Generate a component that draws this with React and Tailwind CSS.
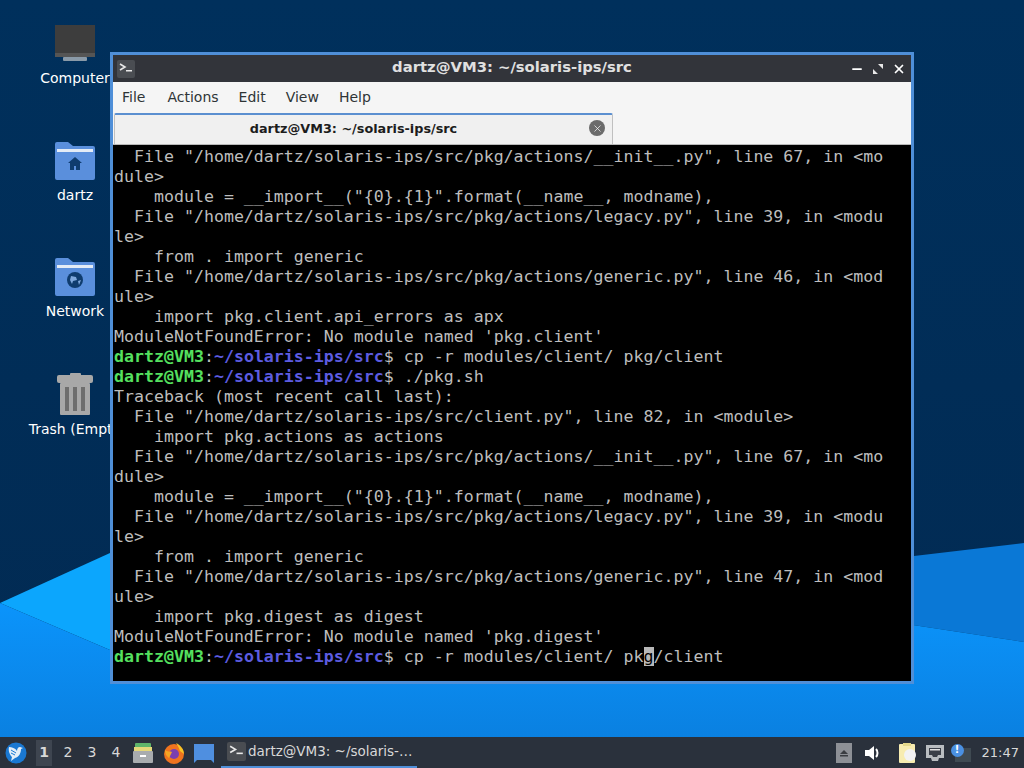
import { Minus, X } from "lucide-react";

const mono = "font-['DejaVu_Sans_Mono',monospace]";
const sans = "font-['DejaVu_Sans',sans-serif]";

const G = "text-[#55e05f] font-bold";
const B = "text-[#5c5ce0] font-bold";

function Prompt({ cmd }) {
  return (
    <div className="h-5">
      <span className={G}>dartz@VM3</span>
      <span>:</span>
      <span className={B}>~/solaris-ips/src</span>
      <span>$ {cmd}</span>
    </div>
  );
}

const before = [
  '  File "/home/dartz/solaris-ips/src/pkg/actions/__init__.py", line 67, in <mo',
  "dule>",
  '    module = __import__("{0}.{1}".format(__name__, modname),',
  '  File "/home/dartz/solaris-ips/src/pkg/actions/legacy.py", line 39, in <modu',
  "le>",
  "    from . import generic",
  '  File "/home/dartz/solaris-ips/src/pkg/actions/generic.py", line 46, in <mod',
  "ule>",
  "    import pkg.client.api_errors as apx",
  "ModuleNotFoundError: No module named 'pkg.client'",
];

const after = [
  "Traceback (most recent call last):",
  '  File "/home/dartz/solaris-ips/src/client.py", line 82, in <module>',
  "    import pkg.actions as actions",
  '  File "/home/dartz/solaris-ips/src/pkg/actions/__init__.py", line 67, in <mo',
  "dule>",
  '    module = __import__("{0}.{1}".format(__name__, modname),',
  '  File "/home/dartz/solaris-ips/src/pkg/actions/legacy.py", line 39, in <modu',
  "le>",
  "    from . import generic",
  '  File "/home/dartz/solaris-ips/src/pkg/actions/generic.py", line 47, in <mod',
  "ule>",
  "    import pkg.digest as digest",
  "ModuleNotFoundError: No module named 'pkg.digest'",
];

function Line({ text }) {
  return <div className="h-5">{text}</div>;
}

function Wallpaper() {
  return (
    <svg className="absolute inset-0 h-full w-full" viewBox="0 0 1024 768" preserveAspectRatio="none">
      <defs>
        <linearGradient id="dark" x1="0" y1="0" x2="0" y2="1">
          <stop offset="0" stopColor="#00305c" />
          <stop offset="1" stopColor="#022a52" />
        </linearGradient>
        <linearGradient id="base" x1="0" y1="0" x2="0" y2="1">
          <stop offset="0" stopColor="#0b94fb" />
          <stop offset="1" stopColor="#0a7cdb" />
        </linearGradient>
      </defs>
      <rect width="1024" height="768" fill="url(#dark)" />
      <path d="M0 603 L110 553 L500 500 L500 650 L110 650 Z" fill="#0ca6fd" />
      <path d="M880 560 L1024 543 L1024 642 L880 620 Z" fill="#0a78d6" />
      <path d="M0 603 L110 650 L880 620 L1024 642 L1024 768 L0 768 Z" fill="url(#base)" />
    </svg>
  );
}

function FolderIcon({ children }) {
  return (
    <svg width="40" height="38" viewBox="0 0 40 38">
      <path d="M0 2a2 2 0 0 1 2-2h11l5 4h20a2 2 0 0 1 2 2v30a2 2 0 0 1-2 2H2a2 2 0 0 1-2-2Z" fill="#5a8fdc" />
      <rect x="2" y="7" width="36" height="3" fill="#e4ecf6" />
      {children}
    </svg>
  );
}

function DesktopItem({ label, children, labelClass = "" }) {
  return (
    <div className="flex w-[150px] flex-col items-center">
      <div className="flex h-[42px] items-center justify-center">{children}</div>
      <div className={`mt-[3px] whitespace-nowrap text-[14px] leading-5 text-white ${sans} ${labelClass}`}>{label}</div>
    </div>
  );
}

function DesktopIcons() {
  return (
    <div className="absolute left-0 top-[23px] flex w-[150px] flex-col gap-[51.67px]">
      <DesktopItem label="Computer">
        <svg width="40" height="38" viewBox="0 0 40 38">
          <rect x="0" y="0" width="40" height="32" fill="#3d3d3d" />
          <rect x="0" y="28" width="40" height="4" fill="#555" />
          <rect x="8" y="32" width="24" height="4" rx="1" fill="#8a9aa8" />
        </svg>
      </DesktopItem>
      <DesktopItem label="dartz">
        <FolderIcon>
          <path d="M20 15l7 6h-2v7h-4v-4h-2v4h-4v-7h-2Z" fill="#0f3c6e" />
        </FolderIcon>
      </DesktopItem>
      <DesktopItem label="Network">
        <FolderIcon>
          <circle cx="20" cy="22" r="8" fill="#0f3c6e" />
          <path d="M16 18l5 1 1 3-4 1-1 3-2-4ZM23 23l3-1-2 5Z" fill="#7fa8dc" />
        </FolderIcon>
      </DesktopItem>
      <DesktopItem label="Trash (Empty)" labelClass="ml-[5px] mt-[4px]">
        <svg width="36" height="42" viewBox="0 0 36 42">
          <rect x="13" y="0" width="11" height="4" rx="1" fill="#a8a8a8" />
          <rect x="0" y="2" width="36" height="8" rx="2" fill="#a8a8a8" />
          <rect x="3" y="10" width="30" height="32" rx="1" fill="#a8a8a8" />
          <rect x="8" y="14" width="4" height="24" fill="#6e6e6e" />
          <rect x="16" y="14" width="4" height="24" fill="#6e6e6e" />
          <rect x="24" y="14" width="4" height="24" fill="#6e6e6e" />
        </svg>
      </DesktopItem>
    </div>
  );
}

function TermIcon({ size = 18 }) {
  return (
    <svg width={size} height={size} viewBox="0 0 18 18">
      <rect width="18" height="18" rx="2" fill="#4a4d52" />
      <path d="M3 4l5 3-5 3" fill="none" stroke="#e8e8e8" strokeWidth="1.6" />
      <rect x="9" y="10" width="6" height="1.5" fill="#e8e8e8" />
    </svg>
  );
}

function TerminalWindow() {
  return (
    <div className="absolute left-[110px] top-[52px] flex h-[632px] w-[804px] flex-col border-[3px] border-[#4f8fd8] bg-[#f2f2f2]">
      <div className="relative flex h-[27px] shrink-0 items-center bg-[#32343a] pl-[4px] text-white">
        <TermIcon />
        <div className={`absolute inset-x-0 top-[2px] text-center text-[14.8px] font-bold leading-5 text-[#e0e0e0] ${sans}`}>dartz@VM3: ~/solaris-ips/src</div>
        <div className="relative ml-auto flex items-center gap-[7px] pr-[5px] text-white">
          <Minus size={14} strokeWidth={3} />
          <svg width="14" height="14" viewBox="0 0 14 14">
            <path d="M2 12V7l5 5ZM12 2v5L7 2Z" fill="#e8e8e8" />
          </svg>
          <X size={14} strokeWidth={3} />
        </div>
      </div>
      <div className={`flex h-[31px] shrink-0 items-center gap-[20px] bg-[#f5f5f5] pl-[9px] text-[14px] text-[#2e3436] ${sans}`}>
        <span className="mr-[2px]">File</span>
        <span>Actions</span>
        <span>Edit</span>
        <span>View</span>
        <span>Help</span>
      </div>
      <div className="flex h-[32px] shrink-0 border-b border-[#b8b8b8] bg-[#f5f5f5] pl-px">
        <div className={`relative flex h-[31px] w-[499px] items-center justify-center rounded-t-[2px] border-x border-t-2 border-x-[#c0c0c0] border-t-[#5b8fd0] bg-[#f0f0f0] pb-[2px] pr-[20px] text-[12.8px] font-bold text-[#1c1c1c] ${sans}`}>
          dartz@VM3: ~/solaris-ips/src
          <span className="absolute right-[7px] top-[5px] flex h-4 w-4 items-center justify-center rounded-full bg-[#6b6b6b] text-white">
            <X size={11} strokeWidth={1.5} />
          </span>
        </div>
      </div>
      <div className={`min-h-0 flex-1 overflow-hidden whitespace-pre bg-black pl-px pt-[2px] text-[16.6px] leading-5 text-[#bdbdbd] ${mono}`}>
        {before.map((text, i) => (
          <Line key={i} text={text} />
        ))}
        <Prompt cmd="cp -r modules/client/ pkg/client" />
        <Prompt cmd="./pkg.sh" />
        {after.map((text, i) => (
          <Line key={i} text={text} />
        ))}
        <div className="h-5">
          <span className={G}>dartz@VM3</span>
          <span>:</span>
          <span className={B}>~/solaris-ips/src</span>
          <span>$ cp -r modules/client/ pk</span>
          <span className="bg-[#b8b8b8] text-black">g</span>
          <span>/client</span>
        </div>
      </div>
    </div>
  );
}

function Taskbar() {
  return (
    <div className={`absolute inset-x-0 bottom-0 flex h-[31px] items-center bg-[#2a313c] text-[#d8d8d8] ${sans}`}>
      <svg className="ml-[5px]" width="22" height="22" viewBox="0 0 22 22">
        <circle cx="11" cy="11" r="10.5" fill="#1a78d2" />
        <path d="M4 5c3 0 6 1 8 4 0-2 1-4 3-4l3 1-2 1c0 4-2 8-6 9l-4 3 1-4C5 13 3 9 4 5Z" fill="#e4eef8" />
        <path d="M6 8l5 3M6 11l4 2" fill="none" stroke="#1a78d2" strokeWidth="1" />
      </svg>
      <div className="ml-[9px] flex text-[14px]">
        <span className="flex h-[26px] w-[16px] items-center justify-center bg-[#3e4550] font-bold">1</span>
        <span className="ml-[8px] flex w-[16px] items-center justify-center">2</span>
        <span className="ml-[8px] flex w-[16px] items-center justify-center">3</span>
        <span className="ml-[8px] flex w-[16px] items-center justify-center">4</span>
      </div>
      <svg className="ml-[8px]" width="22" height="22" viewBox="0 0 22 22">
        <rect x="3" y="1" width="16" height="5" rx="1" fill="#5fb56a" />
        <rect x="2" y="5" width="18" height="4" fill="#e5d87a" />
        <rect x="1" y="9" width="20" height="12" rx="1" fill="#a8acaf" />
        <rect x="8" y="13" width="6" height="2" fill="#fff" />
      </svg>
      <svg className="ml-[9px]" width="22" height="22" viewBox="0 0 22 22">
        <circle cx="11" cy="12" r="10" fill="#f0741f" />
        <path d="M13 1c4 2 8 6 8 11l-4-3c-1-3-2-5-4-8Z" fill="#f7c325" />
        <circle cx="11" cy="12" r="5" fill="#7a3fb0" />
        <path d="M2 8c2 2 5 1 7 2l-3 6c-3-2-4-5-4-8Z" fill="#f5a623" />
      </svg>
      <svg className="ml-[8px]" width="22" height="20" viewBox="0 0 22 20">
        <path d="M1 1h20v19l-3-3H4l-3 3Z" fill="#4f8fe0" />
      </svg>
      <div className="ml-[6px] flex h-[31px] w-[196px] items-center border-b-2 border-[#4f8fd8] pl-[6px]">
        <TermIcon size={19} />
        <span className="ml-[2px] whitespace-nowrap text-[13.5px]">dartz@VM3: ~/solaris-…</span>
      </div>
      <div className="ml-auto flex items-center pr-[5px]">
        <span className="flex h-5 w-4 items-center justify-center bg-[#8d9096]">
          <svg width="10" height="10" viewBox="0 0 10 10">
            <path d="M5 2l4 4H1ZM1 7h8v1.5H1Z" fill="#3a3d42" />
          </svg>
        </span>
        <svg className="ml-[12px]" width="18" height="18" viewBox="0 0 18 18">
          <path d="M1 6h4l5-4v14l-5-4H1Z" fill="#fff" />
          <path d="M12 5c2 2 2 6 0 8" fill="none" stroke="#fff" strokeWidth="2" />
        </svg>
        <svg className="ml-[16px]" width="20" height="22" viewBox="0 0 20 22">
          <rect x="1" y="2" width="16" height="19" rx="1" fill="#f7ecb0" />
          <rect x="5" y="1" width="8" height="3" fill="#e4d88a" />
          <circle cx="12" cy="13" r="6" fill="#f2f2f2" />
        </svg>
        <svg className="ml-[7px]" width="20" height="18" viewBox="0 0 20 18">
          <path d="M1 1h18v13h-5l-1 3H7l-1-3H1Z" fill="#b8bcc0" />
          <path d="M4 4h12v7h-3l-1 2H8l-1-2H4Z" fill="#3a3f48" />
          <path d="M5 5h10v1.5H5Z" fill="#e0e0e0" />
        </svg>
        <span className="relative ml-[6px] flex h-[18px] w-[20px] items-end justify-end">
          <span className="h-[14px] w-[16px] bg-[#3f4a52]" />
          <span className="absolute left-0 top-0 flex h-[13px] w-[13px] items-center justify-center rounded-full bg-[#4a90e2] text-[10px] font-bold leading-none text-white">!</span>
        </span>
        <span className="ml-[11px] text-[13px]">21:47</span>
      </div>
    </div>
  );
}

export default function App() {
  return (
    <div className="relative h-[768px] w-[1024px] overflow-hidden bg-[#00305c]">
      <Wallpaper />
      <DesktopIcons />
      <TerminalWindow />
      <Taskbar />
    </div>
  );
}
